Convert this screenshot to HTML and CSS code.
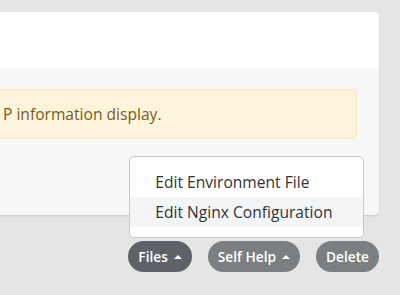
FILE: index.html
```html
<!DOCTYPE html>
<html lang="en">
<head>
  <meta charset="UTF-8">
  <title>Site</title>
  <link rel="stylesheet" href="styles.css">
</head>
<body>
  <div class="card">
    <div class="card-header"></div>
    <div class="card-body">
      <div class="alert">P information display.</div>
    </div>
  </div>

  <div class="actions">
    <div class="dropdown">
      <button class="btn btn-dark">Files <span class="caret"></span></button>
      <ul class="menu">
        <li>Edit Environment File</li>
        <li class="active">Edit Nginx Configuration</li>
      </ul>
    </div>
    <button class="btn">Self Help <span class="caret"></span></button>
    <button class="btn">Delete</button>
  </div>
</body>
</html>
```

FILE: styles.css
```css
body {
  margin: 0;
  padding-top: 12px;
  background: #e5e5e5;
  font-family: 'Open Sans', sans-serif;
  overflow: hidden;
}

.card {
  margin-left: -20px;
  width: 399px;
  border-radius: 5px;
  overflow: hidden;
  box-shadow: 0 1px 2px rgba(0,0,0,0.12);
}

.card-header {
  height: 56px;
  background: #fff;
}

.card-body {
  background: #f7f7f7;
  padding: 21px 22px 76px 0;
}

.alert {
  height: 48px;
  line-height: 48px;
  padding-left: 22px;
  background: #fcf5dc;
  border: 1px solid #f6e6b3;
  border-radius: 5px;
  color: #7a5a1c;
  font-size: 15.6px;
}

.actions {
  display: flex;
  justify-content: flex-end;
  gap: 16px;
  margin-top: 26px;
  padding-right: 21px;
}

.dropdown {
  position: relative;
}

.btn {
  height: 31px;
  padding: 0 10px;
  border: none;
  border-radius: 16px;
  background: #7b7f81;
  color: #fff;
  font-family: 'Open Sans', sans-serif;
  font-size: 13.7px;
  font-weight: 600;
  display: flex;
  align-items: center;
  gap: 6px;
}

.btn-dark {
  background: #5c6268;
}

.caret {
  width: 0;
  height: 0;
  border-left: 4px solid transparent;
  border-right: 4px solid transparent;
  border-bottom: 4px solid #fff;
}

.menu {
  position: absolute;
  left: 1px;
  bottom: 34px;
  width: 233px;
  margin: 0;
  padding: 10px 0;
  list-style: none;
  background: #fff;
  border: 1px solid #c9c9c9;
  border-radius: 5px;
}

.menu li {
  height: 30px;
  line-height: 30px;
  padding-left: 25px;
  font-size: 15.6px;
  color: #333;
  white-space: nowrap;
}

.menu li.active {
  background: #f4f5f7;
}
```
